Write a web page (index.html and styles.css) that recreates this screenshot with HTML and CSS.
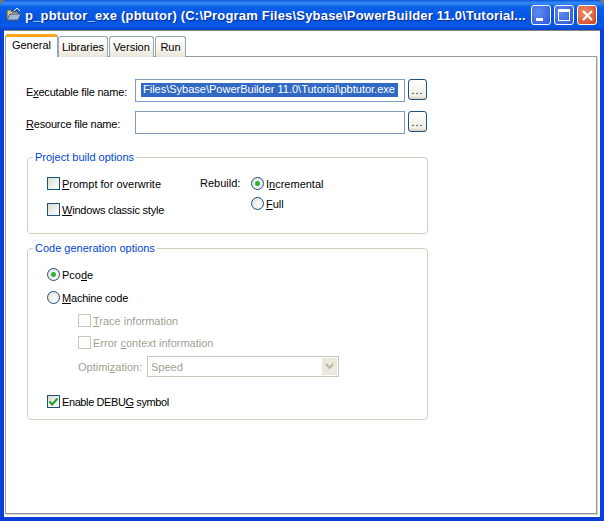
FILE: index.html
```html
<!DOCTYPE html>
<html lang="en">
<head>
    <meta charset="UTF-8">
    <title>p_pbtutor_exe</title>
    <link rel="stylesheet" href="styles.css">
</head>
<body>
    <div class="window">
        <div class="titlebar">
            <svg class="app-icon" width="16" height="16" viewBox="0 0 16 16">
                <path d="M1 4 L1 13 L12 13 L12 5 L6 5 L5 3 L2 3 Z" fill="#d8c890" stroke="#5a5a48"/>
                <path d="M1 13 L4 7 L15 7 L12 13 Z" fill="#9fb8dc" stroke="#4a5a78"/>
                <path d="M8 4 L11 1 L14 4" fill="none" stroke="#f4f0e0"/>
            </svg>
            <span class="title">p_pbtutor_exe (pbtutor) (C:\Program Files\Sybase\PowerBuilder 11.0\Tutorial...</span>
            <div class="caption-btns">
                <div class="cap-btn"><span class="min-glyph"></span></div>
                <div class="cap-btn"><span class="max-glyph"></span></div>
                <div class="cap-btn close">
                    <svg width="13" height="13" viewBox="0 0 13 13"><path d="M2 2 L11 11 M11 2 L2 11" stroke="#fff" stroke-width="2.2"/></svg>
                </div>
            </div>
        </div>
        <div class="client">
            <div class="tabs">
                <div class="tab active">General</div>
                <div class="tab">Libraries</div>
                <div class="tab">Version</div>
                <div class="tab">Run</div>
            </div>
            <div class="page">
                <div class="file-row">
                    <label class="file-label tight">E<u>x</u>ecutable file name:</label>
                    <div class="textbox"><span class="selected">Files\Sybase\PowerBuilder 11.0\Tutorial\pbtutor.exe</span></div>
                    <button class="browse">...</button>
                </div>
                <div class="file-row">
                    <label class="file-label tight"><u>R</u>esource file name:</label>
                    <div class="textbox"></div>
                    <button class="browse">...</button>
                </div>

                <fieldset class="group build">
                    <legend>Project build options</legend>
                    <div class="build-cols">
                        <div class="build-checks">
                            <div class="opt"><span class="check"></span><span><u>P</u>rompt for overwrite</span></div>
                            <div class="opt"><span class="check"></span><span class="tight"><u>W</u>indows classic style</span></div>
                        </div>
                        <div class="rebuild-label">Rebuild:</div>
                        <div class="rebuild-radios">
                            <div class="opt"><span class="radio on"></span><span>I<u>n</u>cremental</span></div>
                            <div class="opt"><span class="radio"></span><span><u>F</u>ull</span></div>
                        </div>
                    </div>
                </fieldset>

                <fieldset class="group codegen">
                    <legend>Code generation options</legend>
                    <div class="opt pcode"><span class="radio on"></span><span>Pco<u>d</u>e</span></div>
                    <div class="opt machine"><span class="radio"></span><span class="tight"><u>M</u>achine code</span></div>
                    <div class="sub">
                        <div class="opt disabled"><span class="check"></span><span><u>T</u>race information</span></div>
                        <div class="opt disabled"><span class="check"></span><span>Error <u>c</u>ontext information</span></div>
                    </div>
                    <div class="optim disabled">
                        <span class="optim-label">Optimi<u>z</u>ation:</span>
                        <div class="combo">
                            <span class="combo-text">Speed</span>
                            <span class="combo-btn">
                                <svg width="9" height="7" viewBox="0 0 9 7"><path d="M1 1 L4.5 5 L8 1" fill="none" stroke="#b8b8a8" stroke-width="2"/></svg>
                            </span>
                        </div>
                    </div>
                    <div class="opt debug">
                        <span class="check">
                            <svg width="11" height="11" viewBox="0 0 11 11"><path d="M1.5 5.5 L4.2 8.5 L9.5 2.5" fill="none" stroke="#21a121" stroke-width="2"/></svg>
                        </span>
                        <span class="tighter">Enable DEBU<u>G</u> symbol</span>
                    </div>
                </fieldset>
            </div>
        </div>
    </div>
</body>
</html>
```

FILE: styles.css
```css
html, body {
    margin: 0;
    padding: 0;
}

body {
    width: 604px;
    height: 521px;
    overflow: hidden;
    background: #7a7a6a;
    font-family: "Liberation Sans", Arial, sans-serif;
    font-size: 11px;
    color: #000;
}

.tight {
    letter-spacing: -0.2px;
}

.tighter {
    letter-spacing: -0.4px;
}

.window {
    box-sizing: border-box;
    width: 604px;
    height: 521px;
    padding: 0 4px 4px;
    background: #0a3fd8;
    border-radius: 7px 7px 0 0;
    display: flex;
    flex-direction: column;
}

.titlebar {
    height: 30px;
    flex: none;
    display: flex;
    align-items: center;
    margin: 0 -4px;
    padding: 0 7px 0 6px;
    border-radius: 7px 7px 0 0;
    background: linear-gradient(#0a55dd 0, #3a8cf4 3px, #0a5fe8 7px, #0454e4 20px, #0a5ae8 26px, #0340c8 30px);
}

.app-icon {
    flex: none;
    margin-right: 3px;
}

.title {
    flex: 1;
    font-size: 13px;
    font-weight: bold;
    letter-spacing: 0.2px;
    color: #fff;
    white-space: nowrap;
    overflow: hidden;
    text-shadow: 1px 1px 0 #0a2a90;
}

.caption-btns {
    display: flex;
    gap: 3px;
    flex: none;
}

.cap-btn {
    box-sizing: border-box;
    width: 20px;
    height: 20px;
    border: 1px solid #fff;
    border-radius: 3px;
    background: radial-gradient(circle at 35% 35%, #5f8cf0, #2a55d8);
    display: flex;
    align-items: center;
    justify-content: center;
    position: relative;
}

.cap-btn.close {
    background: radial-gradient(circle at 35% 35%, #f0906a, #d0401c);
}

.min-glyph {
    width: 7px;
    height: 3px;
    background: #fff;
    margin-top: 8px;
    margin-right: 4px;
}

.max-glyph {
    box-sizing: border-box;
    width: 12px;
    height: 12px;
    border: 1px solid #fff;
    border-top-width: 3px;
}

.client {
    flex: 1;
    min-height: 0;
    background: #fff;
    border-top: 1px solid #8a8a80;
    padding: 3px 3px 3px 1px;
    display: flex;
    flex-direction: column;
}

.tabs {
    display: flex;
    align-items: flex-end;
    height: 23px;
    flex: none;
    padding-left: 0;
    position: relative;
    z-index: 1;
    margin-bottom: -1px;
}

.tab {
    box-sizing: border-box;
    height: 21px;
    padding: 4px 0 0;
    margin-right: 1px;
    border: 1px solid #91a7b4;
    border-bottom: none;
    border-radius: 3px 3px 0 0;
    background: linear-gradient(#fff, #f3f1e8 70%, #e8e6da);
    text-align: center;
}

.tab.active {
    height: 23px;
    width: 53px;
    padding-top: 2px;
    background: #fff;
    border-top: 3px solid #ffa51e;
    margin-right: 0;
}

.tab:nth-child(2) { width: 50px; }
.tab:nth-child(3) { width: 45px; }
.tab:nth-child(4) { width: 31px; }

.page {
    flex: 1;
    box-sizing: border-box;
    border: 1px solid #919b9c;
    background: #fff;
    padding: 22px 0 0 21px;
    box-shadow: 1px 1px 0 #d8d6c8;
}

.file-row {
    display: flex;
    align-items: center;
    height: 23px;
    margin-bottom: 9px;
}

.file-label {
    width: 109px;
    margin-left: -1px;
    padding-top: 2px;
    flex: none;
    white-space: nowrap;
}

.textbox {
    box-sizing: border-box;
    width: 270px;
    height: 23px;
    flex: none;
    border: 1px solid #7f9db9;
    background: #fff;
    padding: 3px 0 0 5px;
    overflow: hidden;
    white-space: nowrap;
}

.selected {
    display: inline-block;
    width: 257px;
    height: 14px;
    line-height: 13px;
    padding-left: 2px;
    box-sizing: border-box;
    background: #316ac5;
    color: #fff;
    overflow: hidden;
}

.browse {
    box-sizing: border-box;
    width: 19px;
    height: 21px;
    margin: 0 0 2px 3px;
    padding: 1px 0 0;
    border: 1px solid #1c5180;
    border-radius: 3px;
    background: linear-gradient(#fff, #f0efe6 85%, #d6d0c5);
    font: 11px "Liberation Sans", Arial, sans-serif;
    letter-spacing: 1px;
    color: #000;
}

.group {
    box-sizing: border-box;
    width: 401px;
    margin: 0;
    padding: 0;
    border: 1px solid #d0d0bf;
    border-radius: 4px;
}

.group legend {
    padding: 0 2px;
    margin-left: 5px;
    color: #0046d5;
    line-height: 13px;
}

.build {
    height: 83px;
    margin-top: 17px;
}

.codegen {
    height: 178px;
    margin-top: 8px;
}

.opt {
    display: flex;
    align-items: center;
    gap: 2px;
    height: 13px;
    white-space: nowrap;
}

.check {
    box-sizing: border-box;
    width: 13px;
    height: 13px;
    flex: none;
    border: 1px solid #1c5180;
    background: linear-gradient(135deg, #dcdcd4, #fff);
    display: flex;
    align-items: center;
    justify-content: center;
}

.radio {
    box-sizing: border-box;
    width: 13px;
    height: 13px;
    flex: none;
    border: 1px solid #1c5180;
    border-radius: 50%;
    background: radial-gradient(circle at 65% 65%, #fff, #dcdcd4);
    display: flex;
    align-items: center;
    justify-content: center;
}

.radio.on::after {
    content: "";
    width: 5px;
    height: 5px;
    border-radius: 50%;
    background: #2fb32f;
}

.build-cols {
    display: flex;
    padding: 13px 0 0 19px;
}

.build-checks {
    width: 153px;
    display: flex;
    flex-direction: column;
    gap: 13px;
}

.rebuild-label {
    width: 51px;
}

.rebuild-radios {
    display: flex;
    flex-direction: column;
    gap: 7px;
}

.pcode {
    margin: 13px 0 0 19px;
}

.machine {
    margin: 10px 0 0 19px;
}

.sub {
    margin: 10px 0 0 50px;
    display: flex;
    flex-direction: column;
    gap: 9px;
}

.disabled {
    color: #a1a192;
}

.disabled .check {
    border-color: #c9c7ba;
    background: #fff;
}

.optim {
    display: flex;
    align-items: center;
    margin: 7px 0 0 50px;
    height: 21px;
}

.optim-label {
    width: 69px;
}

.combo {
    box-sizing: border-box;
    width: 192px;
    height: 21px;
    border: 1px solid #c9c7ba;
    background: #fff;
    display: flex;
    align-items: center;
    padding: 1px;
}

.combo-text {
    flex: 1;
    padding-left: 2px;
}

.combo-btn {
    width: 15px;
    height: 17px;
    background: #ece9dc;
    display: flex;
    align-items: center;
    justify-content: center;
}

.debug {
    margin: 18px 0 0 19px;
}
```
